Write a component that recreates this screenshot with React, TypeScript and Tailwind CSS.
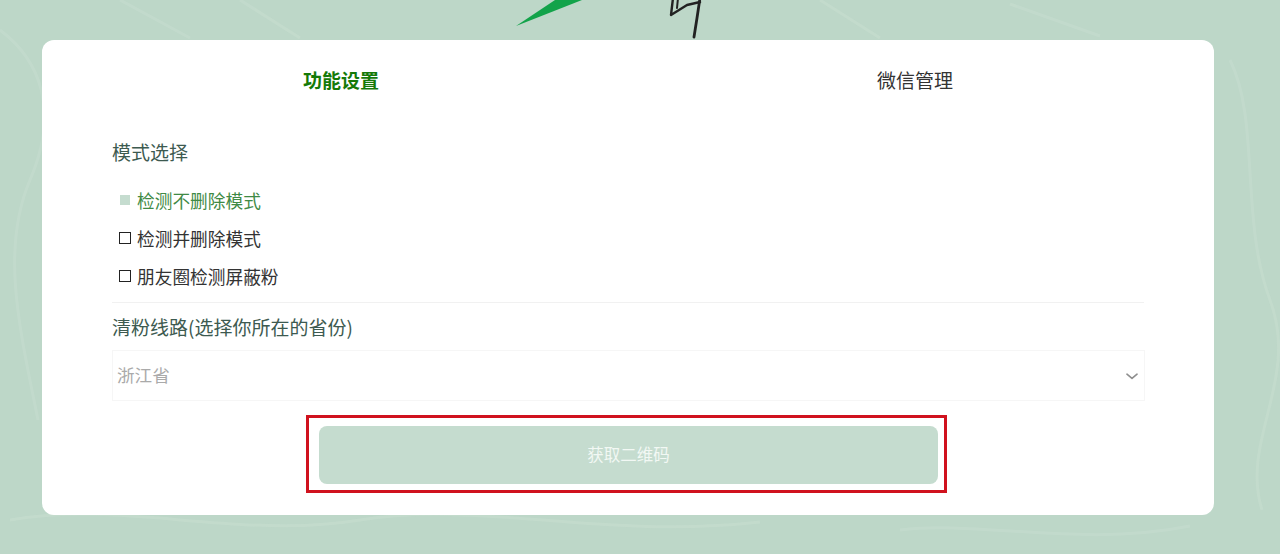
import { useState } from 'react'

const modes = ['检测不删除模式', '检测并删除模式', '朋友圈检测屏蔽粉']

function BgTexture() {
  return (
    <svg className="absolute inset-0 w-full h-full" viewBox="0 0 1280 554" preserveAspectRatio="none">
      <g fill="none" stroke="#cfe3d8" strokeWidth="3" opacity="0.3">
        <path d="M0 30 C40 60 60 110 30 180 S20 330 38 420" />
        <path d="M10 520 C120 500 240 540 360 520 S600 540 760 522" />
        <path d="M1230 60 C1260 120 1240 220 1270 300 S1240 440 1262 510" />
        <path d="M120 0 L190 38 M240 0 L300 38 M820 0 L880 38 M1010 4 L1100 36" />
        <path d="M900 530 C980 520 1080 548 1190 526" />
      </g>
    </svg>
  )
}

function Logo() {
  return (
    <svg className="absolute left-[500px] top-0 w-[220px] h-[40px]" viewBox="0 0 220 40">
      <path d="M16 26 L55 0 L82 0 Z" fill="#12a34a" />
      <path d="M173 -2 L171 15 L187 5 L200 2" fill="none" stroke="#222" strokeWidth="2.4" strokeLinecap="round" strokeLinejoin="round" />
      <path d="M178 -2 L177 8" fill="none" stroke="#222" strokeWidth="2" strokeLinecap="round" />
      <path d="M200 -2 L197 18 L194 37" fill="none" stroke="#222" strokeWidth="2.8" strokeLinecap="round" />
    </svg>
  )
}

export default function App() {
  const [mode, setMode] = useState(0)
  const [tab, setTab] = useState(0)

  return (
    <div className="relative h-[554px] overflow-hidden bg-[#bdd7c8] pt-[40px] px-[42px] font-['Microsoft_YaHei','Noto_Sans_CJK_SC',sans-serif]">
      <BgTexture />
      <Logo />
      <div className="relative h-[475px] w-[1172px] rounded-[12px] bg-white px-[12px]">
        <div className="flex h-[80px] pt-[1px]">
          {['功能设置', '微信管理'].map((t, i) => (
            <button key={t} onClick={() => setTab(i)}
              className={`w-[574px] text-[19px] ${tab === i ? 'font-bold text-[#157a08]' : 'text-[#333]'}`}>
              {t}
            </button>
          ))}
        </div>

        <div className="px-[58px]">
          <div className="h-[24px] mt-[20px] text-[19px] leading-[24px] text-[#3d5a50]">模式选择</div>

          <div className="mt-[17px] pl-[7px] flex flex-col">
            {modes.map((m, i) => (
              <div key={m} onClick={() => setMode(i)}
                className={`flex h-[38px] items-center gap-[6px] text-[17.7px] cursor-pointer ${mode === i ? 'text-[#3f8a45]' : 'text-[#333]'}`}>
                {mode === i
                  ? <span className="ml-[1px] mr-[1px] w-[10px] h-[10px] bg-[#c5dccf]" />
                  : <span className="w-[12px] h-[12px] border border-[#222]" />}
                {m}
              </div>
            ))}
          </div>

          <div className="mt-[7px] border-t border-[#f1f1f1] pt-[12px] h-[48px] text-[19px] leading-[24px] text-[#3d5a50]">
            清粉线路(选择你所在的省份)
          </div>

          <div className="flex h-[51px] w-[1033px] items-center justify-between border border-[#f6f6f6] pl-[4px] text-[17.6px] text-[#aaaaaa]">
            <span>浙江省</span>
            <svg className="mr-[1px]" width="22" height="22" viewBox="0 0 24 24" fill="none" stroke="#8f8f8f" strokeWidth="1.8" strokeLinecap="round" strokeLinejoin="round">
              <path d="M6.5 10 L12 14.5 L17.5 10" />
            </svg>
          </div>

          <div className="mt-[14px] ml-[194px] w-[641px] h-[78px] border-[3px] border-[#d0121e] pt-[8px] pl-[10px]">
            <button className="w-[619px] h-[58px] pb-[2px] rounded-[8px] bg-[#c5dccf] text-[16.5px] text-[#f2f8f4]">
              获取二维码
            </button>
          </div>
        </div>
      </div>
    </div>
  )
}
